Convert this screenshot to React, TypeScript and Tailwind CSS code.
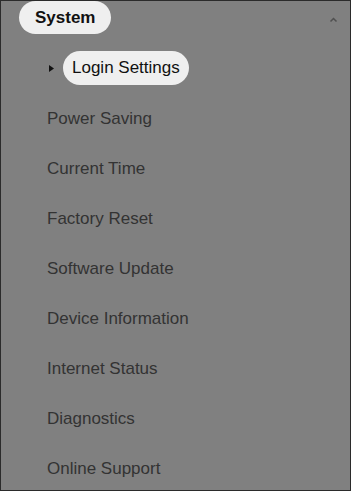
import React from "react";

const items = [
  "Power Saving",
  "Current Time",
  "Factory Reset",
  "Software Update",
  "Device Information",
  "Internet Status",
  "Diagnostics",
  "Online Support",
];

export default function App() {
  return (
    <div
      className="w-[351px] h-[491px] border border-[#2b2b2b] bg-[#808080] overflow-hidden flex flex-col"
      style={{ fontFamily: '"Liberation Sans", Arial, sans-serif' }}
    >
      <div className="flex items-start justify-between pl-[18px] pr-[12px] h-[42px] shrink-0">
        <div className="h-[33px] px-4 rounded-full bg-[#efefef] flex items-center text-[17px] font-bold text-[#111]">
          System
        </div>
        <svg width="9" height="7" viewBox="0 0 9 7" className="mt-[15px]">
          <polyline points="1.5,5.5 4.5,2.5 7.5,5.5" fill="none" stroke="#505050" strokeWidth="1.5" />
        </svg>
      </div>
      <div className="h-[50px] shrink-0 flex items-center pl-[47px]">
        <svg width="7" height="9" viewBox="0 0 7 9" className="mr-[8px]">
          <polygon points="1,1 6,4.5 1,8" fill="#111" />
        </svg>
        <div className="h-[34px] px-[9px] rounded-full bg-[#efefef] flex items-center text-[17px] text-[#111]">
          Login Settings
        </div>
      </div>
      {items.map((t) => (
        <div key={t} className="h-[50px] shrink-0 flex items-center pt-[2px] pl-[46px] text-[17px] text-[#333]">
          {t}
        </div>
      ))}
    </div>
  );
}
